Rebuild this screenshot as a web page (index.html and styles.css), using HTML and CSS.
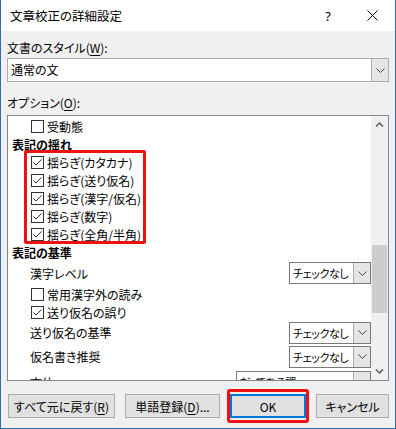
FILE: index.html
```html
<!DOCTYPE html>
<html lang="ja">
<head>
    <meta charset="UTF-8">
    <title>文章校正の詳細設定</title>
    <link rel="stylesheet" href="styles.css">
</head>
<body>
    <div class="window">
        <div class="titlebar">
            <span class="title">文章校正の詳細設定</span>
            <span class="help">?</span>
            <span class="close">
                <svg width="11" height="11" viewBox="0 0 11 11"><path d="M0.5 0.5 L10.5 10.5 M10.5 0.5 L0.5 10.5" stroke="#000" stroke-width="1"/></svg>
            </span>
        </div>

        <div class="content">
            <div class="label first">文書のスタイル(<u>W</u>):</div>
            <div class="select">
                <span class="select-text">通常の文</span>
                <span class="select-btn">
                    <svg width="9" height="5" viewBox="0 0 9 5"><path d="M0.5 0.5 L4.5 4.5 L8.5 0.5" fill="none" stroke="#444" stroke-width="1"/></svg>
                </span>
            </div>

            <div class="label options">オプション(<u>O</u>):</div>
            <div class="listbox">
                <div class="list">
                    <div class="row item"><span class="check"></span>受動態</div>
                    <div class="row head">表記の揺れ</div>
                    <div class="row item"><span class="check on"><svg width="11" height="11" viewBox="0 0 11 11"><path d="M1.5 5.5 L4 8 L9.5 2.5" fill="none" stroke="#333" stroke-width="1"/></svg></span>揺らぎ(カタカナ)</div>
                    <div class="row item"><span class="check on"><svg width="11" height="11" viewBox="0 0 11 11"><path d="M1.5 5.5 L4 8 L9.5 2.5" fill="none" stroke="#333" stroke-width="1"/></svg></span>揺らぎ(送り仮名)</div>
                    <div class="row item"><span class="check on"><svg width="11" height="11" viewBox="0 0 11 11"><path d="M1.5 5.5 L4 8 L9.5 2.5" fill="none" stroke="#333" stroke-width="1"/></svg></span>揺らぎ(漢字/仮名)</div>
                    <div class="row item"><span class="check on"><svg width="11" height="11" viewBox="0 0 11 11"><path d="M1.5 5.5 L4 8 L9.5 2.5" fill="none" stroke="#333" stroke-width="1"/></svg></span>揺らぎ(数字)</div>
                    <div class="row item"><span class="check on"><svg width="11" height="11" viewBox="0 0 11 11"><path d="M1.5 5.5 L4 8 L9.5 2.5" fill="none" stroke="#333" stroke-width="1"/></svg></span>揺らぎ(全角/半角)</div>
                    <div class="row head">表記の基準</div>
                    <div class="row combo-row r1">
                        <span class="combo-label">漢字レベル</span>
                        <span class="combo"><span class="combo-text">チェックなし</span><span class="combo-btn"><svg width="9" height="5" viewBox="0 0 9 5"><path d="M0.5 0.5 L4.5 4.5 L8.5 0.5" fill="none" stroke="#444" stroke-width="1"/></svg></span></span>
                    </div>
                    <div class="row item"><span class="check"></span>常用漢字外の読み</div>
                    <div class="row item"><span class="check on"><svg width="11" height="11" viewBox="0 0 11 11"><path d="M1.5 5.5 L4 8 L9.5 2.5" fill="none" stroke="#333" stroke-width="1"/></svg></span>送り仮名の誤り</div>
                    <div class="row combo-row r2">
                        <span class="combo-label">送り仮名の基準</span>
                        <span class="combo"><span class="combo-text">チェックなし</span><span class="combo-btn"><svg width="9" height="5" viewBox="0 0 9 5"><path d="M0.5 0.5 L4.5 4.5 L8.5 0.5" fill="none" stroke="#444" stroke-width="1"/></svg></span></span>
                    </div>
                    <div class="row combo-row r3">
                        <span class="combo-label">仮名書き推奨</span>
                        <span class="combo"><span class="combo-text">チェックなし</span><span class="combo-btn"><svg width="9" height="5" viewBox="0 0 9 5"><path d="M0.5 0.5 L4.5 4.5 L8.5 0.5" fill="none" stroke="#444" stroke-width="1"/></svg></span></span>
                    </div>
                    <div class="row combo-row r4">
                        <span class="combo-label">文体</span>
                        <span class="combo wide"><span class="combo-text">だ・である調</span><span class="combo-btn"></span></span>
                    </div>
                    <div class="highlight"></div>
                </div>
                <div class="scrollbar">
                    <span class="arrow">
                        <svg width="9" height="5" viewBox="0 0 9 5"><path d="M1 4.5 L4.5 1 L8 4.5" fill="none" stroke="#606060" stroke-width="1.6"/></svg>
                    </span>
                    <div class="track"><div class="thumb"></div></div>
                    <span class="arrow">
                        <svg width="9" height="5" viewBox="0 0 9 5"><path d="M1 0.5 L4.5 4 L8 0.5" fill="none" stroke="#606060" stroke-width="1.6"/></svg>
                    </span>
                </div>
            </div>

            <div class="buttons">
                <button class="btn reset">すべて元に戻す(<u>R</u>)</button>
                <button class="btn word">単語登録(<u>D</u>)...</button>
                <span class="ok-wrap"><button class="btn ok">OK</button></span>
                <button class="btn cancel">キャンセル</button>
            </div>
        </div>
    </div>
</body>
</html>
```

FILE: styles.css
```css
/* dialog */

body {
    margin: 0;
    font-family: "Noto Sans CJK JP", "Noto Sans", sans-serif;
    font-size: 12px;
    font-feature-settings: "palt";
    color: #000;
}

.window {
    width: 396px;
    height: 429px;
    box-sizing: border-box;
    border: 1px solid #2b6cb3;
    border-top: none;
    background-color: #f0f0f0;
    overflow: hidden;
}

.titlebar {
    height: 31px;
    background-color: #fff;
    display: flex;
    align-items: center;
}

.title {
    margin-left: 9px;
    flex: 1;
    font-size: 12.5px;
}

.help {
    font-family: "Noto Sans", sans-serif;
    font-size: 13px;
    margin-right: 36px;
}

.close {
    display: flex;
    margin-right: 17px;
}

.content {
    padding: 9px 6px 0 6px;
}

.label {
    height: 16px;
    line-height: 16px;
}

.label.options {
    margin-top: 13px;
}

u {
    text-underline-offset: 2px;
}

.select {
    margin-top: 2px;
    height: 24px;
    box-sizing: border-box;
    border: 1px solid #adadad;
    background-color: #fff;
    display: flex;
}

.select-text {
    flex: 1;
    line-height: 22px;
    padding-left: 3px;
}

.select-btn {
    width: 16px;
    background-color: #e5e5e5;
    border-left: 1px solid #adadad;
    display: flex;
    align-items: center;
    justify-content: center;
}

.listbox {
    margin-top: 4px;
    height: 266px;
    box-sizing: border-box;
    border: 1px solid #828790;
    display: flex;
}

.list {
    flex: 1;
    position: relative;
    background-color: #fff;
    overflow: hidden;
    padding-top: 1px;
}

.row {
    display: flex;
    align-items: center;
    height: 18px;
    flex-shrink: 0;
}

.row.item {
    padding-left: 23px;
}

.row.head {
    padding-left: 4px;
    font-weight: bold;
}

.check {
    width: 13px;
    height: 13px;
    box-sizing: border-box;
    border: 1px solid #333;
    background-color: #fff;
    margin-right: 3px;
    display: flex;
    align-items: center;
    justify-content: center;
}

.row.combo-row {
    padding-left: 22px;
}

.row.r1 {
    height: 24px;
}

.row.r2 {
    height: 23px;
}

.row.r3 {
    height: 25px;
}

.row.r4 {
    height: 26px;
}

.combo-label {
    flex: 1;
    white-space: nowrap;
}

.combo {
    width: 82px;
    height: 22px;
    box-sizing: border-box;
    border: 1px solid #7a7a7a;
    background-color: #fff;
    display: flex;
}

.combo.wide {
    width: 135px;
}

.combo-text {
    flex: 1;
    line-height: 20px;
    padding-left: 3px;
    font-size: 11px;
    letter-spacing: -0.4px;
    white-space: nowrap;
    overflow: hidden;
}

.combo-btn {
    width: 16px;
    flex-shrink: 0;
    background-color: #e5e5e5;
    border-left: 1px solid #adadad;
    display: flex;
    align-items: center;
    justify-content: center;
}

.highlight {
    position: absolute;
    left: 16px;
    top: 34px;
    width: 122px;
    height: 94px;
    box-sizing: border-box;
    border: 3px solid #ee1111;
    border-radius: 2px;
}

.scrollbar {
    width: 17px;
    background-color: #f0f0f0;
    display: flex;
    flex-direction: column;
}

.arrow {
    height: 17px;
    display: flex;
    align-items: center;
    justify-content: center;
}

.track {
    flex: 1;
}

.thumb {
    margin-top: 112px;
    margin-left: 1px;
    width: 15px;
    height: 68px;
    background-color: #cdcdcd;
}

.buttons {
    margin-top: 13px;
    display: flex;
    gap: 10px;
    padding-left: 1px;
}

.btn {
    height: 24px;
    padding: 0;
    font-family: inherit;
    font-size: 12px;
    font-feature-settings: "palt";
    background-color: #e1e1e1;
    border: 1px solid #adadad;
    color: #000;
}

.btn.reset {
    width: 107px;
}

.btn.word {
    width: 95px;
}

.ok-wrap {
    position: relative;
    display: flex;
}

.btn.ok {
    width: 76px;
    border: 2px solid #0078d7;
}

.ok-wrap::after {
    content: "";
    position: absolute;
    left: -3px;
    right: -3px;
    top: -5px;
    bottom: -5px;
    border: 3px solid #ee1111;
    border-radius: 3px;
}

.btn.cancel {
    width: 73px;
}
```
